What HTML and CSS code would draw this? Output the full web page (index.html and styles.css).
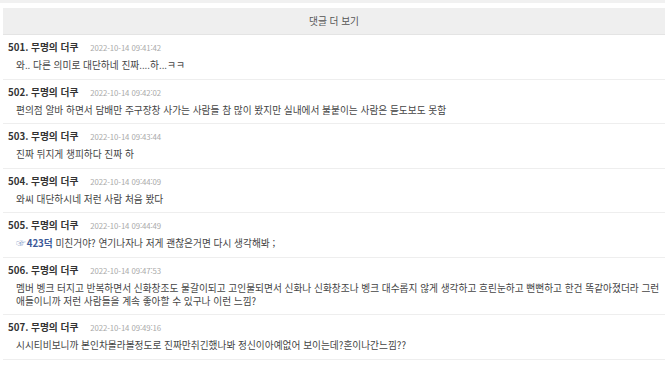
FILE: index.html
```html
<!DOCTYPE html>
<html lang="ko">
<head>
    <meta charset="UTF-8">
    <meta name="viewport" content="width=device-width, initial-scale=1.0">
    <title>댓글</title>
    <link rel="stylesheet" href="styles.css">
</head>
<body>
    <div class="top-bar"></div>

    <div class="comments">
        <div class="more-btn">댓글 더 보기</div>

        <div class="comment">
            <div class="comment-head">
                <span class="author">501. 무명의 더쿠</span>
                <span class="date">2022-10-14 09:41:42</span>
            </div>
            <div class="comment-text">와.. 다른 의미로 대단하네 진짜....하...ㅋㅋ</div>
        </div>

        <div class="comment">
            <div class="comment-head">
                <span class="author">502. 무명의 더쿠</span>
                <span class="date">2022-10-14 09:42:02</span>
            </div>
            <div class="comment-text">편의점 알바 하면서 담배만 주구장창 사가는 사람들 참 많이 봤지만 실내에서 불붙이는 사람은 듣도보도 못함</div>
        </div>

        <div class="comment">
            <div class="comment-head">
                <span class="author">503. 무명의 더쿠</span>
                <span class="date">2022-10-14 09:43:44</span>
            </div>
            <div class="comment-text">진짜 뒤지게 챙피하다 진짜 하</div>
        </div>

        <div class="comment">
            <div class="comment-head">
                <span class="author">504. 무명의 더쿠</span>
                <span class="date">2022-10-14 09:44:09</span>
            </div>
            <div class="comment-text">와씨 대단하시네 저런 사람 처음 봤다</div>
        </div>

        <div class="comment">
            <div class="comment-head">
                <span class="author">505. 무명의 더쿠</span>
                <span class="date">2022-10-14 09:44:49</span>
            </div>
            <div class="comment-text"><span class="reply-to"><span class="hand">☞</span>423덕</span> 미친거야? 연기나자나 저게 괜찮은거면 다시 생각해봐 ;</div>
        </div>

        <div class="comment">
            <div class="comment-head">
                <span class="author">506. 무명의 더쿠</span>
                <span class="date">2022-10-14 09:47:53</span>
            </div>
            <div class="comment-text">멤버 벵크 터지고 반복하면서 신화창조도 물갈이되고 고인물되면서 신화나 신화창조나 벵크 대수롭지 않게 생각하고 흐린눈하고 뻔뻔하고 한건 똑같아졌더라 그런 애들이니까 저런 사람들을 계속 좋아할 수 있구나 이런 느낌?</div>
        </div>

        <div class="comment">
            <div class="comment-head">
                <span class="author">507. 무명의 더쿠</span>
                <span class="date">2022-10-14 09:49:16</span>
            </div>
            <div class="comment-text">시시티비보니까 본인차몰라볼정도로 진짜만취긴했나봐 정신이아예없어 보이는데?혼이나간느낌??</div>
        </div>
    </div>
</body>
</html>
```

FILE: styles.css
```css
body {
    margin: 0;
    padding: 0;
    background-color: #ffffff;
    font-family: "Noto Sans CJK KR", "Noto Sans", sans-serif;
    color: #444;
    overflow: hidden;
}

.top-bar {
    height: 3px;
    background-color: #f1f1f1;
}

.comments {
    width: 662px;
    margin-left: 3px;
    padding-top: 5px;
}

.more-btn {
    height: 26px;
    line-height: 26px;
    text-align: center;
    font-size: 9.7px;
    color: #555;
    background-color: #efefef;
    border-bottom: 1px solid #e4e4e4;
}

.comment {
    padding: 6px 0 6.5px 5px;
    border-bottom: 1px solid #eeeeee;
}

.comment-head {
    display: flex;
    align-items: baseline;
    gap: 12px;
    height: 13px;
    line-height: 13px;
}

.author {
    font-size: 9.7px;
    font-weight: bold;
    color: #333;
}

.date {
    font-size: 7.8px;
    letter-spacing: -0.1px;
    color: #aaa;
}

.comment-text {
    margin-top: 5px;
    padding-left: 8px;
    font-size: 9.7px;
    line-height: 13px;
    color: #444;
}

.reply-to {
    font-weight: bold;
    color: #3b5998;
}

.hand {
    font-weight: normal;
    color: #8fa6cc;
    margin-right: 1px;
}
```
